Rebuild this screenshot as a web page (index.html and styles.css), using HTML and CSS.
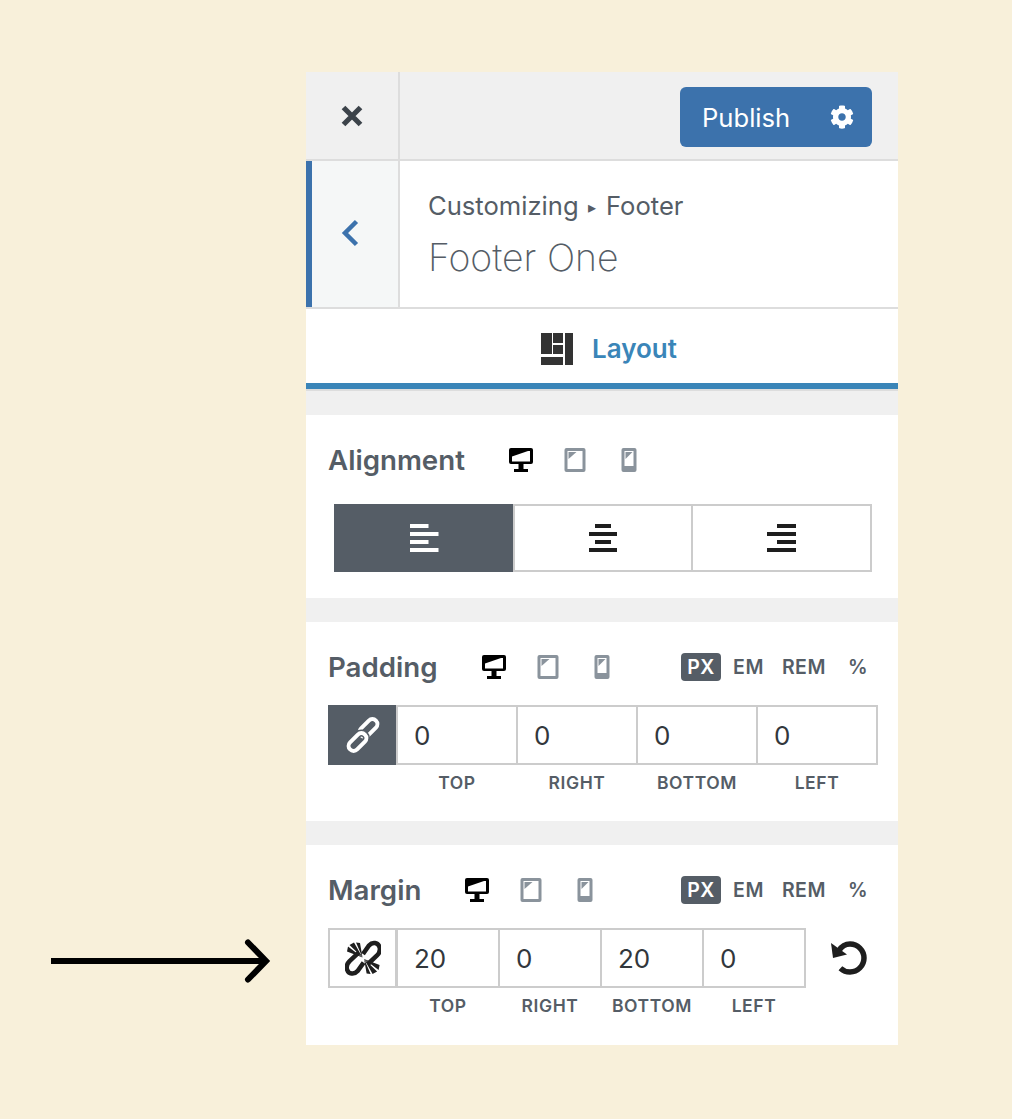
FILE: index.html
```html
<!DOCTYPE html>
<html lang="en">
<head>
<meta charset="utf-8">
<title>Footer One</title>
<link rel="stylesheet" href="styles.css">
</head>
<body>
<svg class="defs" width="0" height="0" aria-hidden="true">
  <symbol id="desktop" viewBox="0 0 24 24">
    <rect width="24" height="16" rx="2" fill="#000"/>
    <rect x="3" y="3" width="18" height="10.500" fill="#fff"/>
    <path d="M3 3h16L3 8.500z" fill="#000"/>
    <path d="M9.500 16h5v5h-5zM5 21h14v3H5z" fill="#000"/>
  </symbol>
  <symbol id="tablet" viewBox="0 0 21 24">
    <rect width="21" height="24" rx="2" fill="#8a939c"/>
    <rect x="3" y="3" width="15" height="18" fill="#fff"/>
    <path d="M4 4h8L4 11z" fill="#8a939c"/>
  </symbol>
  <symbol id="phone" viewBox="0 0 15 24">
    <rect width="15" height="24" rx="2" fill="#8a939c"/>
    <rect x="3" y="3" width="9" height="15" fill="#fff"/>
    <path d="M4 4h7L4 11z" fill="#8a939c"/>
  </symbol>
</svg>

<svg class="pointer" width="230" height="50" viewBox="0 0 230 50" aria-hidden="true">
  <path d="M1 25H214" stroke="#000" stroke-width="6" fill="none"/>
  <path d="M198 6.500L216 25 198 43.500" stroke="#000" stroke-width="6" stroke-linecap="round" fill="none"/>
</svg>

<main class="panel">
  <header class="topbar">
    <button class="close" type="button" aria-label="Close">
      <svg width="24" height="24" viewBox="0 0 24 24"><path d="M3.500 3.500l17 17M20.500 3.500l-17 17" stroke="#3c434a" stroke-width="5.200" fill="none"/></svg>
    </button>
    <div class="topbar-actions">
      <button class="publish" type="button">
        <span>Publish</span>
        <svg width="24" height="24" viewBox="0 0 512 512"><path fill="#fff" d="M487.4 315.7l-42.6-24.6c4.300-23.2 4.300-47 0-70.200l42.600-24.600c4.900-2.800 7.100-8.600 5.500-14-11.100-35.600-30-67.800-54.700-94.600-3.800-4.100-10-5.100-14.800-2.300L380.800 110c-17.900-15.400-38.500-27.300-60.800-35.100V25.800c0-5.600-3.900-10.500-9.400-11.700-36.700-8.200-74.300-7.800-109.200 0-5.500 1.200-9.400 6.100-9.400 11.700V75c-22.200 7.900-42.800 19.800-60.800 35.100L88.700 85.500c-4.900-2.800-11-1.900-14.800 2.300-24.700 26.700-43.600 58.900-54.700 94.600-1.700 5.400.6 11.200 5.500 14L67.300 221c-4.300 23.200-4.300 47 0 70.200l-42.600 24.600c-4.900 2.800-7.100 8.600-5.500 14 11.100 35.600 30 67.800 54.700 94.600 3.800 4.100 10 5.100 14.800 2.300l42.600-24.600c17.900 15.400 38.500 27.300 60.800 35.100v49.200c0 5.600 3.900 10.500 9.400 11.700 36.700 8.200 74.300 7.800 109.200 0 5.500-1.200 9.400-6.100 9.400-11.700v-49.200c22.200-7.900 42.800-19.800 60.800-35.100l42.600 24.600c4.900 2.800 11 1.900 14.800-2.300 24.700-26.700 43.600-58.900 54.700-94.600 1.500-5.500-.7-11.300-5.600-14.100zM256 336c-44.100 0-80-35.900-80-80s35.900-80 80-80 80 35.900 80 80-35.900 80-80 80z"/></svg>
      </button>
    </div>
  </header>

  <section class="section-head">
    <button class="back" type="button" aria-label="Back">
      <svg width="18" height="28" viewBox="0 0 18 28"><path d="M15.500 2.500L4 14l11.500 11.500" stroke="#3c72ac" stroke-width="4.500" fill="none"/></svg>
    </button>
    <div class="head-text">
      <div class="crumb">Customizing <span class="crumb-sep">▸</span> Footer</div>
      <h1 class="head-title">Footer One</h1>
    </div>
  </section>

  <nav class="tabs">
    <svg width="32" height="32" viewBox="0 0 32 32"><path fill="#333" d="M0 0h11v21H0zM12 0h10v10H12zM12 12h10v9H12zM24 0h8v32h-8zM0 24h22v8H0z"/></svg>
    <span class="tab-label">Layout</span>
  </nav>

  <section class="card card-align">
    <div class="card-head">
      <h2 class="card-title">Alignment</h2>
      <div class="devices">
        <svg class="dev" width="24" height="24"><use href="#desktop"/></svg>
        <svg class="dev" width="21" height="24"><use href="#tablet"/></svg>
        <svg class="dev" width="15" height="24"><use href="#phone"/></svg>
      </div>
    </div>
    <div class="align-group">
      <button class="align-btn is-active" type="button" aria-label="Left">
        <svg width="29" height="28" viewBox="0 0 29 28"><path fill="#fff" d="M0 0h18.500v4H0zM0 8h28.500v4H0zM0 16h18.500v4H0zM0 24h28.500v4H0z"/></svg>
      </button>
      <button class="align-btn" type="button" aria-label="Center">
        <svg width="29" height="28" viewBox="0 0 29 28"><path fill="#1e1e1e" d="M6 0h16v4H6zM0 8h28v4H0zM6 16h16v4H6zM0 24h28v4H0z"/></svg>
      </button>
      <button class="align-btn" type="button" aria-label="Right">
        <svg width="29" height="28" viewBox="0 0 29 28"><path fill="#1e1e1e" d="M10 0h19v4H10zM0 8h29v4H0zM10 16h19v4H10zM0 24h29v4H0z"/></svg>
      </button>
    </div>
  </section>

  <section class="card card-padding">
    <div class="card-head">
      <h2 class="card-title">Padding</h2>
      <div class="devices">
        <svg class="dev" width="24" height="24"><use href="#desktop"/></svg>
        <svg class="dev" width="21" height="24"><use href="#tablet"/></svg>
        <svg class="dev" width="15" height="24"><use href="#phone"/></svg>
      </div>
      <div class="units">
        <span class="unit is-active">PX</span><span class="unit">EM</span><span class="unit">REM</span><span class="unit">%</span>
      </div>
    </div>
    <div class="dims">
      <button class="link-btn is-active" type="button" aria-label="Linked">
        <svg width="36" height="36" viewBox="0 0 36 36" fill="none">
          <rect x="18.500" y="0.500" width="10" height="21" rx="5" transform="rotate(45 23.500 11)" stroke="#fff" stroke-width="4"/>
          <rect x="7.500" y="14.500" width="10" height="21" rx="5" transform="rotate(45 12.500 25)" stroke="#555d66" stroke-width="7"/>
          <rect x="7.500" y="14.500" width="10" height="21" rx="5" transform="rotate(45 12.500 25)" stroke="#fff" stroke-width="4"/>
        </svg>
      </button>
      <div class="dim-cell"><input class="dim-input" type="text" value="0" aria-label="Top"><span class="dim-label">TOP</span></div>
      <div class="dim-cell"><input class="dim-input" type="text" value="0" aria-label="Right"><span class="dim-label">RIGHT</span></div>
      <div class="dim-cell"><input class="dim-input" type="text" value="0" aria-label="Bottom"><span class="dim-label">BOTTOM</span></div>
      <div class="dim-cell"><input class="dim-input" type="text" value="0" aria-label="Left"><span class="dim-label">LEFT</span></div>
    </div>
  </section>

  <section class="card card-margin">
    <div class="card-head">
      <h2 class="card-title">Margin</h2>
      <div class="devices">
        <svg class="dev" width="24" height="24"><use href="#desktop"/></svg>
        <svg class="dev" width="21" height="24"><use href="#tablet"/></svg>
        <svg class="dev" width="15" height="24"><use href="#phone"/></svg>
      </div>
      <div class="units">
        <span class="unit is-active">PX</span><span class="unit">EM</span><span class="unit">REM</span><span class="unit">%</span>
      </div>
    </div>
    <div class="dims dims-narrow">
      <button class="link-btn" type="button" aria-label="Unlinked">
        <svg width="36" height="36" viewBox="0 0 36 36">
          <path fill="none" stroke="#1e1e1e" stroke-width="4.500" d="M18 14L24 5.500C27.500 1.500 33 2.500 34.500 7C35.500 10 34.500 13 32 15.500L23 24M18.600 22.600L12.600 31.100C9.100 35.100 3.600 34.100 2.100 29.600C1.100 26.600 2.100 23.600 4.600 21.100L13.600 12.600"/>
          <path fill="#1e1e1e" d="M17.500 17.500L2 11.500l1-5zM17.500 17.500L4.500 5 9 2.500zM17.500 17.500L11 2.500l4 .5zM19.100 19.100L34.600 25.100l-1 5zM19.100 19.100L32.100 31.600l-4.500 2.500zM19.100 19.100L25.600 34.100l-4-.5z"/>
        </svg>
      </button>
      <div class="dim-cell"><input class="dim-input" type="text" value="20" aria-label="Top"><span class="dim-label">TOP</span></div>
      <div class="dim-cell"><input class="dim-input" type="text" value="0" aria-label="Right"><span class="dim-label">RIGHT</span></div>
      <div class="dim-cell"><input class="dim-input" type="text" value="20" aria-label="Bottom"><span class="dim-label">BOTTOM</span></div>
      <div class="dim-cell"><input class="dim-input" type="text" value="0" aria-label="Left"><span class="dim-label">LEFT</span></div>
      <button class="reset" type="button" aria-label="Reset">
        <svg width="38" height="36" viewBox="0 0 38 36" fill="none"><path d="M9 10.500C11.500 6.500 15.500 4 20 4c7.700 0 14 6.300 14 14s-6.300 14-14 14c-3.800 0-7-1.400-9.600-3.800" stroke="#1e1e1e" stroke-width="5.500"/><path d="M1 3l2 15 14-3.500z" fill="#1e1e1e"/></svg>
      </button>
    </div>
  </section>
</main>
</body>
</html>
```
FILE: styles.css
```css
* { box-sizing: border-box; }
html, body { margin: 0; height: 100%; }
body {
  position: relative;
  background: #f8f0da;
  font-family: "Inter", "Liberation Sans", sans-serif;
  color: #555d66;
  padding: 72px 114px 0 306px;
  overflow: hidden;
}
button { font: inherit; padding: 0; border: 0; background: none; cursor: pointer; }
.defs { position: absolute; }
.pointer { position: absolute; left: 50px; top: 936px; }

.panel { width: 592px; background: #f0f0f0; display: flex; flex-direction: column; }

.topbar { display: flex; height: 89px; border-bottom: 2px solid #ddd; }
.close { width: 94px; border-right: 2px solid #ddd; display: flex; align-items: center; justify-content: center; }
.topbar-actions { flex: 1; display: flex; align-items: flex-start; justify-content: flex-end; padding: 15px 26px 0 0; }
.publish { width: 192px; height: 60px; border-radius: 6px; background: #3c72ac; color: #fff; font-size: 25.6px; display: flex; align-items: center; justify-content: space-between; padding: 0 18px 0 22px; }

.section-head { display: flex; height: 148px; background: #fff; border-bottom: 2px solid #ddd; }
.back { width: 94px; background: #f5f7f7; border-left: 6px solid #3c72ac; border-right: 2px solid #ddd; display: flex; align-items: center; justify-content: flex-start; padding: 0 0 2px 29px; }
.head-text { padding: 28px 0 0 28px; }
.crumb { font-size: 25.6px; line-height: 34px; color: #555d66; }
.crumb-sep { font-size: 16px; vertical-align: 2px; margin: 0 2.5px; }
.head-title { margin: 12px 0 0; font-size: 37.4px; line-height: 44px; font-weight: 200; color: #555d66; }

.tabs { display: flex; align-items: center; justify-content: center; gap: 19px; height: 80px; background: #fff; border-bottom: 6px solid #3a85b8; padding: 5px 0 0 14px; box-shadow: 0 2px 0 #ddd; }
.tab-label { font-size: 26px; font-weight: 600; color: #3a85b8; }

.card { background: #fff; padding: 0 20px 0 22px; margin-top: 24px; }
.card-align { margin-top: 26px; height: 183px; padding-top: 27px; }
.card-padding { height: 199px; padding-top: 27px; }
.card-margin { height: 200px; padding-top: 27px; }

.card-head { display: flex; align-items: center; height: 36px; }
.card-title { margin: 0; font-size: 27.7px; font-weight: 600; color: #555d66; line-height: 36px; }
.devices { display: flex; margin-left: 29px; }
.dev { display: block; width: 24px; box-sizing: content-box; padding: 0 15px; }
.devices .dev { width: 24px; height: 24px; }

.units { margin-left: auto; display: flex; align-items: center; }
.unit { font-size: 19.5px; font-weight: 600; letter-spacing: .5px; color: #555d66; line-height: 28px; text-align: center; }
.unit.is-active { background: #555d66; color: #fff; border-radius: 4px; width: 40px; }
.unit:nth-child(2) { margin-left: 12px; }
.unit:nth-child(3) { margin-left: 18px; }
.unit:nth-child(4) { margin-left: 22px; margin-right: 10px; }

.align-group { display: flex; margin: 26px 6px 0 6px; }
.align-btn { flex: 1; height: 68px; margin-left: -2px; background: #fff; border: 2px solid #ccc; display: flex; align-items: center; justify-content: center; }
.align-btn:first-child { margin-left: 0; }
.align-btn.is-active { background: #555d66; border-color: #555d66; border-right-color: #ccc; }

.dims { display: flex; margin-top: 20px; height: 89px; }
.link-btn { width: 69px; height: 60px; background: #fff; border: 2px solid #ccc; display: flex; align-items: center; justify-content: center; flex: none; }
.link-btn.is-active { background: #555d66; border-color: #555d66; }
.dim-cell { width: 122px; margin-left: -2px; display: flex; flex-direction: column; align-items: center; flex: none; }
.link-btn + .dim-cell { margin-left: -1px; }
.dim-input { width: 100%; height: 60px; border: 2px solid #ccc; border-radius: 0; padding: 0 0 0 16px; font: 400 26px "Inter", "Liberation Sans", sans-serif; color: #32373c; background: #fff; outline: none; }
.dim-label { margin-top: 8px; font-size: 17.5px; line-height: 20px; font-weight: 600; letter-spacing: .6px; color: #555d66; }
.dims-narrow .dim-cell { width: 104px; }
.reset { width: 38px; height: 60px; margin-left: 24px; display: flex; align-items: center; justify-content: center; flex: none; }
```
